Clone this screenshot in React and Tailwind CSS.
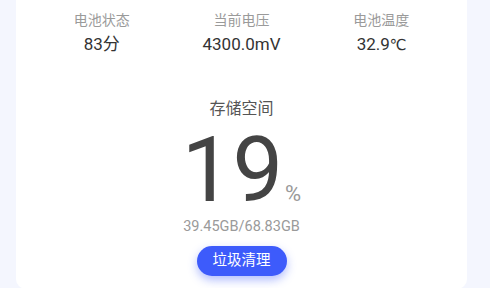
export default function App() {
  const stats = [
    { label: "电池状态", value: "83分" },
    { label: "当前电压", value: "4300.0mV" },
    { label: "电池温度", value: "32.9", unit: "℃" },
  ];
  return (
    <div
      className="h-[288px] w-[490px] bg-[#f4f6fe] px-4 overflow-hidden"
      style={{ fontFamily: "Roboto, 'Noto Sans CJK SC', sans-serif" }}
    >
      <div className="w-[451px] bg-white rounded-b-[10px] px-4 pt-[10px] pb-[13px] flex flex-col items-center">
        <div className="grid grid-cols-3 w-full">
          {stats.map((s) => (
            <div key={s.label} className="flex flex-col items-center">
              <div className="text-[14px] leading-5 text-[#9a9a9a]">{s.label}</div>
              <div className="text-[17px] leading-[22px] text-[#333] mt-[3px]">
                {s.value}
                {s.unit && (
                  <span className="font-['DejaVu_Sans',sans-serif] text-[15px] tracking-[-1px]">{s.unit}</span>
                )}
              </div>
            </div>
          ))}
        </div>
        <div className="mt-[41px] text-[16px] leading-6 text-[#555]">存储空间</div>
        <div className="mt-[8px] flex items-baseline h-[84px]">
          <span className="text-[90px] leading-[84px] text-[#444]">19</span>
          <span className="ml-[2px] text-[22px] leading-none text-[#999]">%</span>
        </div>
        <div className="mt-[4px] text-[14.5px] leading-5 text-[#9a9a9a]">39.45GB/68.83GB</div>
        <button className="mt-[9px] w-[90px] h-[30px] rounded-full bg-[#3d5bfb] text-white text-[14.5px] shadow-[0_4px_10px_rgba(61,91,251,0.4)]">
          垃圾清理
        </button>
      </div>
    </div>
  );
}
